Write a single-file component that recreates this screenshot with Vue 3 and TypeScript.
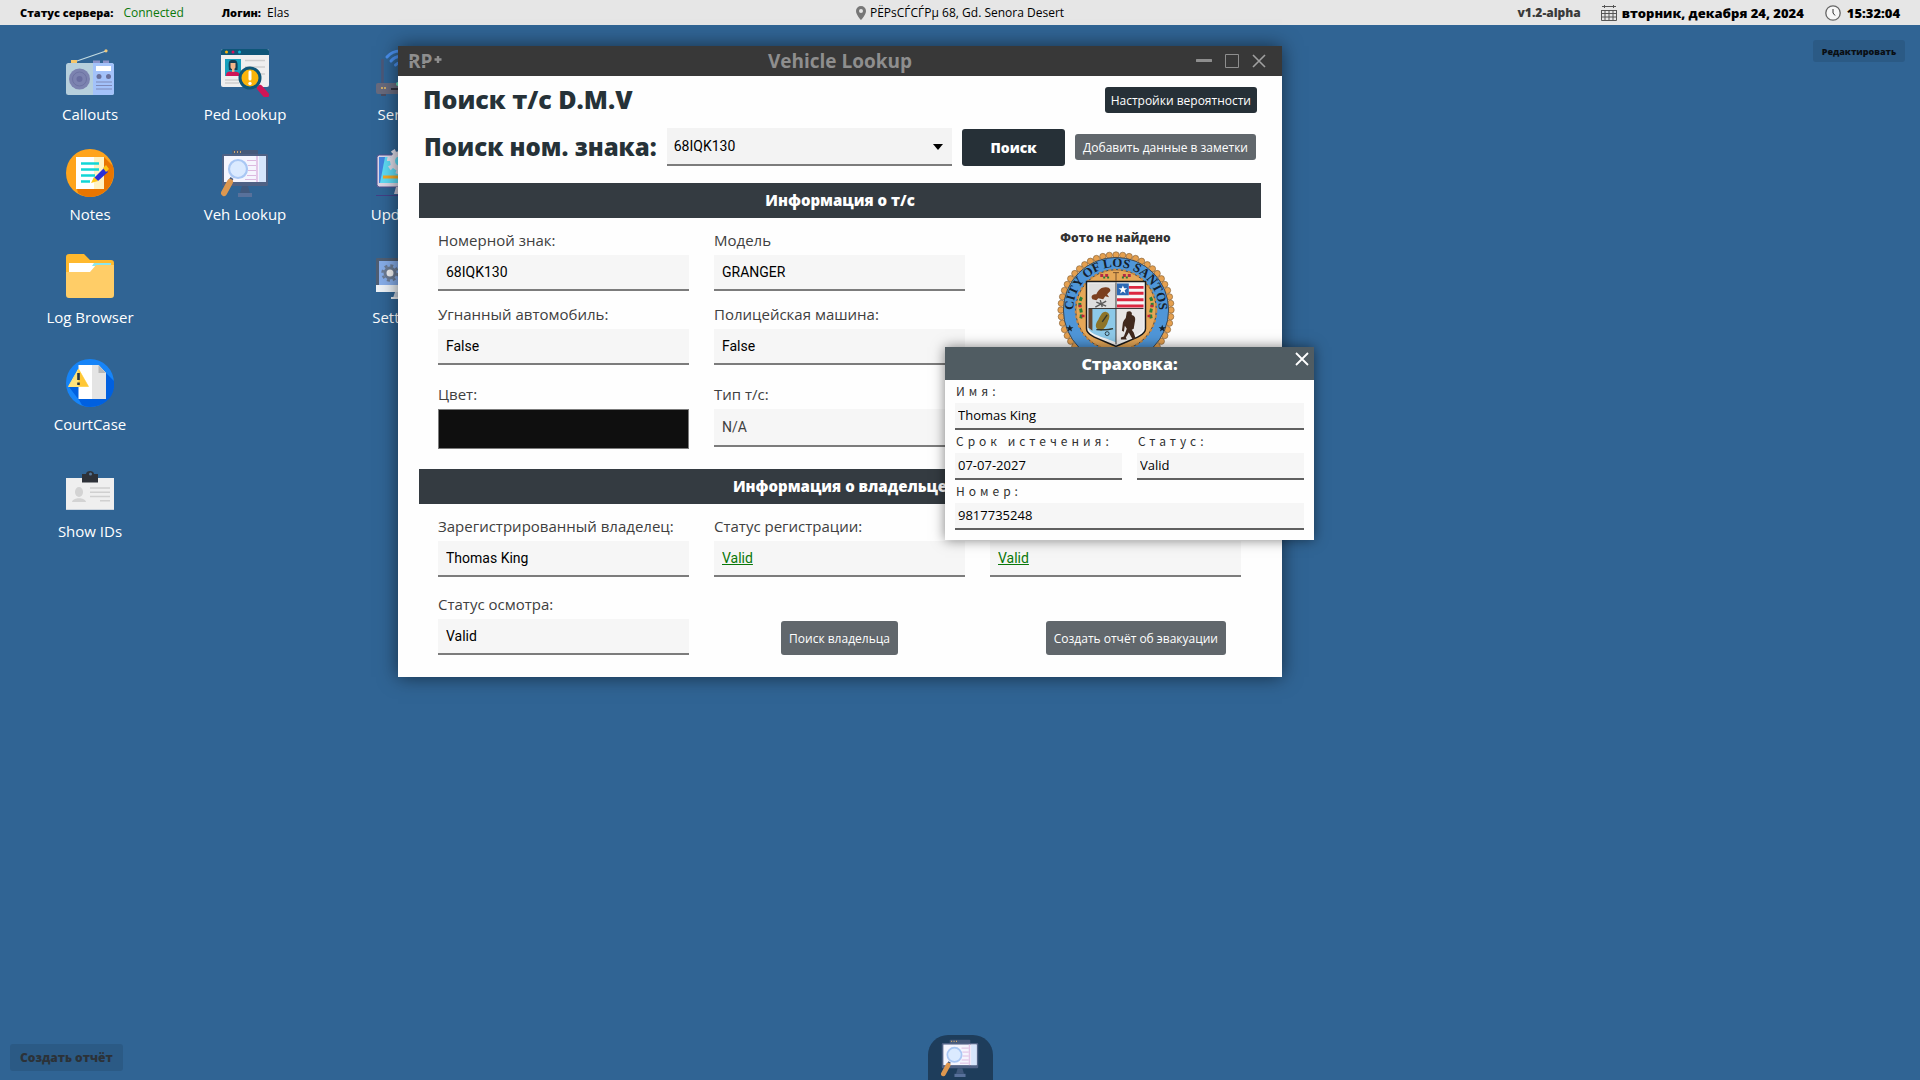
<script setup lang="ts">
import { ref } from 'vue'

interface Shortcut {
  icon: string
  label: string
  col: number
  row: number
}

const shortcuts: Shortcut[] = [
  { icon: 'radio', label: 'Callouts', col: 1, row: 1 },
  { icon: 'ped', label: 'Ped Lookup', col: 2, row: 1 },
  { icon: 'router', label: 'Server', col: 3, row: 1 },
  { icon: 'notes', label: 'Notes', col: 1, row: 2 },
  { icon: 'veh', label: 'Veh Lookup', col: 2, row: 2 },
  { icon: 'update', label: 'Updates', col: 3, row: 2 },
  { icon: 'folder', label: 'Log Browser', col: 1, row: 3 },
  { icon: 'settings', label: 'Settings', col: 3, row: 3 },
  { icon: 'court', label: 'CourtCase', col: 1, row: 4 },
  { icon: 'ids', label: 'Show IDs', col: 1, row: 5 },
]

const plate = ref('68IQK130')
const beads = Array.from({ length: 52 }, (_, i) => {
  const a = (i / 52) * Math.PI * 2
  return { x: Math.round(600 + 560 * Math.cos(a)) / 10, y: Math.round(600 + 560 * Math.sin(a)) / 10 }
})
</script>

<template>
  <div class="desktop">
    <svg class="defs" width="0" height="0" aria-hidden="true">
      <symbol id="i-radio" viewBox="0 0 48 48">
        <path d="M8 13 40 2" stroke="#c3dbe0" stroke-width="1.2" />
        <circle cx="40" cy="1.8" r="1.6" fill="#f2c97a" />
        <rect x="5" y="11" width="6" height="5" fill="#f5c76b" />
        <path d="M27 11.500h7v4h-7zM37 11.500h6v4h-6z" fill="#8c93c9" />
        <rect x="0" y="14" width="48" height="32" rx="2.500" fill="#b6cfdc" />
        <path d="M27 14h18.500a2.500 2.500 0 0 1 2.500 2.500v27a2.500 2.500 0 0 1-2.500 2.500H27z" fill="#a3c2fa" />
        <circle cx="13.500" cy="30" r="10.500" fill="#7c83b0" />
        <circle cx="13.500" cy="30" r="7" fill="none" stroke="#6d73a3" />
        <circle cx="13.500" cy="30" r="3" fill="#696ea0" />
        <rect x="30" y="17" width="15" height="5" fill="#fff" />
        <circle cx="33" cy="27.500" r="2.500" fill="#69709b" />
        <circle cx="42.500" cy="27.500" r="2.500" fill="#69709b" />
        <path d="M30 33h16M30 36.500h16M30 40h16" stroke="#7f8ab8" />
      </symbol>
      <symbol id="i-ped" viewBox="0 0 48 48">
        <rect x="0" y="0" width="48" height="38" rx="2" fill="#efefef" />
        <path d="M0 6V2a2 2 0 0 1 2-2h44a2 2 0 0 1 2 2v4z" fill="#0e5678" />
        <circle cx="5.500" cy="3" r="1.500" fill="#fbb40a" />
        <circle cx="12" cy="3" r="1.500" fill="#d6125a" />
        <circle cx="18.500" cy="3" r="1.500" fill="#14b4d6" />
        <rect x="4" y="10" width="16" height="17" fill="#169fbd" />
        <path d="M8 21c-1-9 0-10 4-10s5 1 4.500 10z" fill="#123f56" />
        <path d="M9.500 14h5v4c0 3-5 3-5 0zM11 18h2.500v5H11z" fill="#f2b58a" />
        <path d="M5 27c0-5 4-5 7-4 3-1 7 0 7 4z" fill="#d01556" />
        <path d="M24 11.500h20M24 18h20M4 31h14M4 34h14M38 25h6" stroke="#cfcfcf" stroke-width="1.600" />
        <path d="m39 39 6 7" stroke="#d01556" stroke-width="6" stroke-linecap="round" />
        <circle cx="29" cy="29" r="10" fill="#fbb40a" stroke="#0e5678" stroke-width="3" />
        <path d="M29 23v7" stroke="#fff" stroke-width="3" stroke-linecap="round" />
        <circle cx="29" cy="34.500" r="1.700" fill="#fff" />
      </symbol>
      <symbol id="i-router" viewBox="0 0 48 48">
        <path d="M6.500 11v24M41.500 11v24" stroke="#4d5878" stroke-width="2.600" stroke-linecap="round" />
        <path d="M11 8c7-8 19-8 26 0M15 12c5-6 13-6 18 0M19.500 16c3-3 6-3 9 0" fill="none" stroke="#4a90f0" stroke-width="3" stroke-linecap="round" />
        <path d="M5 44h5v3H5zM38 44h5v3h-5z" fill="#4b4d61" />
        <rect x="0" y="34" width="48" height="11" rx="2" fill="#686a7d" />
        <path d="M5 39h2M8 39h2" stroke="#f0c060" stroke-width="1.500" />
        <path d="M15 40h12" stroke="#30323f" stroke-width="2" />
        <circle cx="22" cy="35" r="2" fill="#67e0b8" />
      </symbol>
      <symbol id="i-notes" viewBox="0 0 48 48">
        <circle cx="24" cy="24" r="24" fill="#ffa41c" />
        <path d="m38 8 9 9c4 16-8 31-23 31-5 0-9-2-12-4l-1-4z" fill="#e97500" />
        <path d="M10 8h18v32H10z" fill="#fff" />
        <path d="M28 8h10v32H28z" fill="#fff3c4" />
        <path d="M15 14.500h18M15 20.500h18M15 26.500h14M15 32.500h9" stroke="#12d6d6" stroke-width="2.400" />
        <path d="m28 29 10-10 4 4-10 9z" fill="#2a2fd8" />
        <path d="m37 19 3-3 3 4-3 3zM28 28l4 4-7 2z" fill="#ffc414" />
      </symbol>
      <symbol id="i-veh" viewBox="0 0 48 48">
        <path d="M11 5V2a1 1 0 0 1 1-1h24a1 1 0 0 1 1 1v3z" fill="#45597a" />
        <path d="M13 3h1M16 3h1M19 3h1" stroke="#f7c06b" stroke-width="1.500" />
        <rect x="1" y="5" width="46" height="32" rx="1.500" fill="#4f6184" />
        <rect x="3" y="7" width="42" height="26" fill="#f5f5fe" />
        <path d="M38 7h7v26h-7z" fill="#d6e5fb" />
        <path d="M35 7h2v26h-2z" fill="#e3c7e8" />
        <path d="M26 11.500h9M27 16.500h8M27 21.500h8M26 26.500h9M24 30.500h11" stroke="#dcb9df" stroke-width="1.200" />
        <path d="M21 37h6l2 7H19z" fill="#41597d" />
        <path d="M17 44h14v4H17z" fill="#58719b" />
        <circle cx="17" cy="20" r="9" fill="#dbeaff" stroke="#a9c7f4" stroke-width="2.200" />
        <path d="m11 29-2 3" stroke="#47597a" stroke-width="3.500" />
        <path d="m9 33-6 11" stroke="#dd974f" stroke-width="6" stroke-linecap="round" />
      </symbol>
      <symbol id="i-update" viewBox="0 0 48 48">
        <rect x="1" y="6" width="46" height="32" rx="2.500" fill="#dcd8e6" stroke="#56508f" />
        <path d="M3 8h42v26H3z" fill="#5edcf5" />
        <path d="M3 8h6l-5 26H3z" fill="#4284e0" />
        <path d="M7 28h34" stroke="#f6a823" stroke-width="3" />
        <path d="M20 38h8l2 7H18z" fill="#cbc6d7" />
        <path d="M0 46.500h48" stroke="#433f85" />
        <circle cx="24" cy="12" r="7.500" fill="none" stroke="#dedce8" stroke-width="5" />
        <circle cx="24" cy="12" r="11" fill="none" stroke="#dedce8" stroke-width="4" stroke-dasharray="4 4.600" />
      </symbol>
      <symbol id="i-folder" viewBox="0 0 48 48">
        <path d="M0 5a3 3 0 0 1 3-3h15l6 6h21a3 3 0 0 1 3 3v20H0z" fill="#ffb92e" />
        <path d="M3 11h42v12H3z" fill="#fff" />
        <path d="M28 11h17v3H26z" fill="#8be6ee" />
        <path d="M0 20h24l6-7h18v30a3 3 0 0 1-3 3H3a3 3 0 0 1-3-3z" fill="#ffcd67" />
      </symbol>
      <symbol id="i-settings" viewBox="0 0 48 48">
        <rect x="0" y="6" width="48" height="34" rx="1" fill="#4f5e73" />
        <path d="M3 9h42v24H3z" fill="#86ade9" />
        <path d="M0 33h48v7H0z" fill="#edf2f7" />
        <path d="M19 40h10l2 6H17z" fill="#c9d3df" />
        <path d="M15 45h18v2H15z" fill="#e9edf1" />
        <circle cx="14" cy="21" r="5" fill="#f2f2f2" stroke="#6c7c94" stroke-width="3" />
        <circle cx="14" cy="21" r="7.500" fill="none" stroke="#6c7c94" stroke-width="2.500" stroke-dasharray="3 2.900" />
      </symbol>
      <symbol id="i-court" viewBox="0 0 48 48">
        <circle cx="24" cy="24" r="24" fill="#1684f8" />
        <path d="m40 14 8 8c2 15-9 26-24 26-3 0-6-1-8-2L13 41 3 28z" fill="#0060e0" />
        <path d="M12.500 6h20l7.500 8v26H12.500z" fill="#fff" />
        <path d="M26 6h6.500l7.500 8v26H26z" fill="#e4e4e4" />
        <path d="M32.500 6v8H40z" fill="#b8b8b8" />
        <path d="M2.500 27.500 12.500 10l10 17.500z" fill="#ffe27b" stroke="#ffe27b" stroke-linejoin="round" />
        <path d="m12.500 10 10 17.500h-10z" fill="#ffc736" />
        <path d="M12.500 14v7M12.500 23.500v2.500" stroke="#263440" stroke-width="2.600" />
      </symbol>
      <symbol id="i-ids" viewBox="0 0 48 48">
        <rect x="0" y="12" width="48" height="32" fill="#efefef" />
        <path d="M0 43.500h48" stroke="#cdd5de" />
        <path d="M16 8h4c0-4 8-4 8 0h4v8.500H16z" fill="#2d3138" />
        <circle cx="24.500" cy="8" r="1.500" fill="#56789a" />
        <ellipse cx="13" cy="26" rx="4" ry="5" fill="#d3d3d3" />
        <path d="M6 36c1-5 13-5 14 0z" fill="#d3d3d3" />
        <path d="M24 22h20M24 26.300h20M24 30.500h20M34 34.800h10" stroke="#d0d0d0" stroke-width="1.500" />
      </symbol>
    </svg>

    <header class="topbar">
      <div class="side">
        <b>Статус сервера:</b><span class="connected">Connected</span>
        <b class="login">Логин:</b><span class="user">Elas</span>
      </div>
      <div class="place">
        <svg width="10" height="14" viewBox="0 0 10 14" aria-hidden="true">
          <path d="M5 0a5 5 0 0 0-5 5c0 4 5 9 5 9s5-5 5-9a5 5 0 0 0-5-5zm0 3a2 2 0 1 1 0 4 2 2 0 0 1 0-4z" fill="#777" />
        </svg>
        <span>РЁРѕСЃСЃРµ 68, Gd. Senora Desert</span>
      </div>
      <div class="side end">
        <b class="version">v1.2-alpha</b>
        <svg width="16" height="16" viewBox="0 0 16 16" fill="none" stroke="#555" aria-hidden="true">
          <path d="M1 1.500h14M.5 5v10.500h15V5M0 5.500h16M0 8.500h16M0 12h16M4 5v10M8 5v10M12 5v10" />
          <path d="M3.500 0v3M12.500 0v3" />
        </svg>
        <b class="date">вторник, декабря 24, 2024</b>
        <svg width="16" height="16" viewBox="0 0 16 16" fill="none" aria-hidden="true">
          <circle cx="8" cy="8" r="7.200" fill="#f7f7f7" stroke="#666" stroke-width="1.300" />
          <path d="M8 4v4l2 2.500" stroke="#333" />
        </svg>
        <b class="time">15:32:04</b>
      </div>
    </header>

    <main class="space">
      <nav class="shortcuts" aria-label="Desktop">
        <button
          v-for="s in shortcuts"
          :key="s.label"
          type="button"
          class="shortcut"
          :style="{ gridColumn: s.col, gridRow: s.row }"
        >
          <svg width="48" height="48" aria-hidden="true"><use :href="'#i-' + s.icon" /></svg>
          <span>{{ s.label }}</span>
        </button>
      </nav>

      <button type="button" class="ghost edit">Редактировать</button>

      <section class="window" aria-label="Vehicle Lookup">
        <div class="titlebar">
          <svg class="logo" width="36" height="28" viewBox="0 0 36 28" role="img" aria-label="RP+">
            <text x="0" y="21" class="logo-text">RP</text>
            <path d="M0 13.500h5M14 17.500h4" stroke="#383838" />
            <path d="M30 9v7M26.500 12.500h7" stroke="#8e8e8e" stroke-width="2.400" />
          </svg>
          <h1>Vehicle Lookup</h1>
          <div class="controls">
            <button type="button" aria-label="Свернуть">
              <svg width="16" height="14" viewBox="0 0 16 14"><path d="M1 6.500h14" stroke="#8e8e8e" stroke-width="3" stroke-linecap="round" /></svg>
            </button>
            <button type="button" aria-label="Развернуть">
              <svg width="14" height="14" viewBox="0 0 14 14"><path d="M.5.5h13v13H.5z" fill="none" stroke="#8e8e8e" /></svg>
            </button>
            <button type="button" aria-label="Закрыть">
              <svg width="14" height="14" viewBox="0 0 14 14"><path d="m1 1 12 12M13 1 1 13" stroke="#a0a0a0" stroke-width="1.600" /></svg>
            </button>
          </div>
        </div>

        <div class="body">
          <div class="headline">
            <h2>Поиск т/с D.M.V</h2>
            <button type="button" class="dark small">Настройки вероятности</button>
          </div>
          <form class="search" @submit.prevent>
            <label for="plate-search">Поиск ном. знака:</label>
            <div class="combo">
              <select id="plate-search" v-model="plate">
                <option>68IQK130</option>
              </select>
              <svg width="10" height="6" viewBox="0 0 10 6" aria-hidden="true"><path d="M0 0h10L5 6z" /></svg>
            </div>
            <button type="submit" class="dark go">Поиск</button>
            <button type="button" class="grey small">Добавить данные в заметки</button>
          </form>

          <h3 class="band">Информация о т/с</h3>
          <div class="fields vehicle">
            <div class="field">
              <label for="f-plate">Номерной знак:</label>
              <input id="f-plate" type="text" readonly value="68IQK130" />
            </div>
            <div class="field">
              <label for="f-model">Модель</label>
              <input id="f-model" type="text" readonly value="GRANGER" />
            </div>
            <div class="field">
              <label for="f-stolen">Угнанный автомобиль:</label>
              <input id="f-stolen" type="text" readonly value="False" />
            </div>
            <div class="field">
              <label for="f-police">Полицейская машина:</label>
              <input id="f-police" type="text" readonly value="False" />
            </div>
            <div class="field third">
              <label for="f-color">Цвет:</label>
              <input id="f-color" class="swatch" type="text" readonly value="" />
            </div>
            <div class="field third">
              <label for="f-type">Тип т/с:</label>
              <input id="f-type" class="faded" type="text" readonly value="N/A" />
            </div>
            <figure class="photo">
              <figcaption>Фото не найдено</figcaption>
              <svg width="118" height="118" viewBox="0 0 120 120" role="img" aria-label="City of Los Santos">
                <circle v-for="(b, i) in beads" :key="i" :cx="b.x" :cy="b.y" r="3.200" fill="#e5a04f" stroke="#7b5a35" stroke-width=".6" />
                <circle cx="60" cy="60" r="54" fill="#e5a04f" />
                <circle cx="60" cy="60" r="53.500" fill="#4f96d8" stroke="#29323b" stroke-width=".8" />
                <circle cx="60" cy="60" r="41" fill="#e5a757" stroke="#29323b" stroke-width=".8" />
                <circle cx="60" cy="60" r="41" fill="none" stroke="#c98942" stroke-width="2" stroke-dasharray="3 2" />
                <path id="seal-top" d="M17.500 69a43.500 43.500 0 1 1 85 0" fill="none" />
                <text class="seal-text"><textPath href="#seal-top" startOffset="50%" text-anchor="middle">CITY OF LOS SANTOS</textPath></text>
                <path d="m13 75 1 2.500h2.700l-2.200 1.700.8 2.700-2.300-1.600-2.300 1.600.8-2.700-2.200-1.700H12z" fill="#16202a" />
                <path d="m107 75 1 2.500h2.700l-2.200 1.700.8 2.700-2.300-1.600-2.300 1.600.8-2.700-2.200-1.700h2.700z" fill="#16202a" />
                <path d="M44 25h9M67 25h9" stroke="#b52b44" stroke-width="3" stroke-dasharray="3 2" />
                <path d="M47 27h8M66 27h7" stroke="#287a36" stroke-width="2" stroke-dasharray="2 2" />
                <path d="M60 22v8M57 22h6" stroke="#75502d" />
                <path d="M25 47c-5 10 2 12-1 22M95 47c5 10-2 12 1 22" fill="none" stroke="#29823a" stroke-width="3" stroke-dasharray="4 2" />
                <path d="M22 56h3M25 66h3M98 56h-3M95 66h-3" stroke="#c4243a" stroke-width="2.500" />
                <path d="M30 31h60v48c0 8-18 12-30 18-12-6-30-10-30-18z" fill="#f4f4f4" stroke="#1a1a1a" stroke-width="1.500" />
                <path d="M32 33h28v25H32z" fill="#dedede" />
                <path d="M32 59h28v34c-10-5-28-8-28-15z" fill="#8dc9e8" />
                <path d="M32 59h4v22l-4-3z" fill="#68452a" />
                <path d="M61 59h27v19c0 7-17 10-27 15z" fill="#e8e6e6" />
                <path d="M61 33h27v25H61z" fill="#f6f6f6" />
                <path d="M73 37h15M73 43h15M61 49.500h27M61 56h27" stroke="#dc2740" stroke-width="3" />
                <path d="M61 33h12v12H61z" fill="#2c69b5" />
                <path d="m67 35 1.200 3h3.200l-2.600 2 1 3.200-2.800-2-2.800 2 1-3.200-2.600-2h3.200z" fill="#fff" />
                <path d="M36 49c-2-3 0-5 4-5 2-5 6-8 11-7 2 0 4 2 3 4l-3 3 2 3-4-1-2 3-5-1-2 2z" fill="#7b3f1f" />
                <path d="m40 52 10 4M50 51l-11 6M44 50l2 7" stroke="#5a5a5a" stroke-width="1.400" />
                <path d="M43 80c-5-1-4-6-1-10 2-4 4-9 8-8 4 1 4 5 2 9-1 5-4 8-7 10z" fill="#8d7429" />
                <path d="M40 80c6 0 10 1 17-1M46 72l5-7" stroke="#33362c" stroke-width="1.400" />
                <circle cx="51" cy="84" r="2" fill="none" stroke="#2b3c44" />
                <path d="M71 62c3-2 6 0 5 3 4 1 4 4 3 8l-1 6-2 1 2 3 2 6-3 1-4-7-3 5 1 2h-6v-2l3-1 3-8-2-3-1 6-2-1 1-8c1-3 2-3 3-5z" fill="#41291d" />
                <path d="M60 32v63M32 58.500h56" stroke="#333" />
              </svg>
            </figure>
          </div>

          <h3 class="band">Информация о владельце</h3>
          <div class="fields owner">
            <div class="field">
              <label for="f-owner">Зарегистрированный владелец:</label>
              <input id="f-owner" type="text" readonly value="Thomas King" />
            </div>
            <div class="field">
              <label for="f-reg">Статус регистрации:</label>
              <input id="f-reg" class="valid" type="text" readonly value="Valid" />
            </div>
            <div class="field">
              <label for="f-ins">Статус страховки:</label>
              <input id="f-ins" class="valid" type="text" readonly value="Valid" />
            </div>
            <div class="field">
              <label for="f-insp">Статус осмотра:</label>
              <input id="f-insp" type="text" readonly value="Valid" />
            </div>
            <button type="button" class="grey tall">Поиск владельца</button>
            <button type="button" class="grey tall impound">Создать отчёт об эвакуации</button>
          </div>
        </div>
      </section>

      <section class="popup" aria-label="Страховка">
        <div class="popup-head">
          <h2>Страховка:</h2>
          <button type="button" aria-label="Закрыть">
            <svg width="14" height="14" viewBox="0 0 14 14"><path d="m1 1 12 12M13 1 1 13" stroke="#fff" stroke-width="1.800" /></svg>
          </button>
        </div>
        <div class="popup-body">
          <div class="slot wide">
            <label for="p-name">Имя:</label>
            <input id="p-name" type="text" readonly value="Thomas King" />
          </div>
          <div class="slot">
            <label for="p-exp">Срок истечения:</label>
            <input id="p-exp" type="text" readonly value="07-07-2027" />
          </div>
          <div class="slot">
            <label for="p-status">Статус:</label>
            <input id="p-status" type="text" readonly value="Valid" />
          </div>
          <div class="slot wide">
            <label for="p-num">Номер:</label>
            <input id="p-num" type="text" readonly value="9817735248" />
          </div>
        </div>
      </section>
    </main>

    <footer class="taskbar">
      <button type="button" class="ghost report">Создать отчёт</button>
      <button type="button" class="dock" aria-label="Veh Lookup">
        <svg width="38" height="38" aria-hidden="true"><use href="#i-veh" /></svg>
      </button>
    </footer>
  </div>
</template>

<style>
body {
  margin: 0;
  background: #306494;
}
</style>

<style scoped>
.desktop {
  min-height: 100vh;
  display: flex;
  flex-direction: column;
  background: #306494;
  font-family: "Open Sans", "Noto Sans", sans-serif;
  font-size: 12px;
  color: #000;
}
.desktop *,
.desktop *::before {
  box-sizing: border-box;
}
.defs {
  position: absolute;
}
button {
  margin: 0;
  padding: 0;
  border: 0;
  background: none;
  font-family: inherit;
  cursor: pointer;
  white-space: nowrap;
}
input,
select {
  margin: 0;
  border: 0;
  border-radius: 0;
  outline: 0;
  min-width: 0;
}
h1,
h2,
h3,
figure {
  margin: 0;
}
svg {
  display: block;
  flex: none;
}

.topbar {
  display: flex;
  align-items: center;
  height: 25px;
  padding: 0 20px;
  background: #e6e6e6;
  white-space: nowrap;
}
.side {
  flex: 1;
  display: flex;
  align-items: center;
}
.side b {
  font-size: 11px;
  font-weight: 800;
}
.side.end {
  justify-content: flex-end;
}
.connected {
  margin-left: 10px;
  color: #0a780a;
}
.login {
  margin-left: 38px;
}
.user {
  margin-left: 6px;
}
.place {
  display: flex;
  align-items: center;
  gap: 4px;
}
.end .version {
  margin-right: 20px;
  font-size: 12px;
  color: #3a3a3a;
}
.end .date {
  margin: 0 21px 0 5px;
  font-size: 13px;
}
.end .time {
  margin-left: 6px;
  font-size: 13px;
}

.space {
  position: relative;
  flex: 1;
  min-height: 660px;
}
.shortcuts {
  display: grid;
  grid-template-columns: 156px 154px 156px;
  grid-template-rows: 100px 103px 107px 107px 107px;
  padding: 24px 0 0 12px;
}
.shortcut {
  display: flex;
  flex-direction: column;
  align-items: center;
  align-self: start;
  gap: 6px;
  color: #fff;
  font-size: 15px;
  line-height: 22px;
}

.ghost {
  background: #2b5a85;
  border-radius: 3px;
  font-weight: 800;
}
.edit {
  position: absolute;
  top: 15px;
  right: 15px;
  width: 92px;
  height: 22px;
  font-size: 9px;
  color: #0a0f14;
}

.window {
  position: absolute;
  left: 398px;
  top: 21px;
  width: 884px;
  background: #fefefe;
  box-shadow: 0 0 18px rgba(0, 0, 0, 0.55);
}
.titlebar {
  display: grid;
  grid-template-columns: 1fr auto 1fr;
  align-items: center;
  height: 30px;
  padding: 0 10px;
  background: #383838;
}
.logo-text {
  font: 700 19px "Open Sans", sans-serif;
  fill: #8e8e8e;
}
.titlebar h1 {
  font-size: 19px;
  line-height: 26px;
  font-weight: 700;
  color: #8e8e8e;
}
.controls {
  display: flex;
  justify-content: flex-end;
  gap: 13px;
  padding-right: 6px;
}
.body {
  padding: 11px 21px 22px;
}
.headline {
  display: flex;
  align-items: center;
  justify-content: space-between;
  height: 26px;
  padding: 0 4px;
}
.headline h2,
.search label {
  font-size: 24px;
  line-height: 26px;
  font-weight: 800;
  color: #263238;
  white-space: nowrap;
}
.headline h2 {
  font-size: 25px;
  line-height: 24px;
  padding-bottom: 2px;
}
.dark,
.grey {
  border-radius: 3px;
  color: #fff;
  font-size: 12px;
}
.dark {
  background: #263037;
}
.grey {
  background: #61676c;
}
.small {
  height: 26px;
  padding: 0 6px;
}
.grey.small {
  padding: 0 8px;
}
.search {
  display: flex;
  align-items: center;
  gap: 10px;
  height: 38px;
  margin: 15px 0 17px;
  padding: 0 5px;
}
.combo {
  position: relative;
  flex: 1;
  min-width: 0;
}
.combo select {
  appearance: none;
  display: block;
  width: 100%;
  height: 38px;
  padding: 0 7px;
  background: #f3f3f3;
  border-bottom: 2px solid #7c7c7c;
  font: 14px Roboto, sans-serif;
  color: #000;
}
.combo svg {
  position: absolute;
  right: 9px;
  top: 16px;
  pointer-events: none;
}
.go {
  width: 103px;
  height: 37px;
  font-size: 14px;
  font-weight: 800;
}
.band {
  height: 35px;
  background: #343b41;
  color: #fff;
  font-size: 15px;
  line-height: 35px;
  font-weight: 800;
  text-align: center;
}
.fields {
  display: grid;
  grid-template-columns: repeat(3, 1fr);
  column-gap: 25px;
  padding: 9px 20px 0 19px;
}
.field {
  display: flex;
  flex-direction: column;
}
.field label {
  padding-bottom: 2px;
  font-size: 15px;
  line-height: 26px;
  color: #404040;
  white-space: nowrap;
}
.field input {
  height: 36px;
  padding: 0 8px;
  background: #f6f6f6;
  border-bottom: 2px solid #7c7c7c;
  font: 14px Roboto, sans-serif;
  color: #000;
}
.vehicle {
  row-gap: 10px;
  padding-bottom: 20px;
}
.third {
  margin-top: 6px;
}
.field .swatch {
  height: 40px;
  background: #0f0f0f;
  border: 1px solid #7c7c7c;
}
.field .faded {
  height: 38px;
  color: #404040;
}
.field .valid {
  color: #0a780a;
  text-decoration: underline;
}
.photo {
  grid-column: 3;
  grid-row: 1 / span 3;
  display: flex;
  flex-direction: column;
  align-items: center;
  gap: 2px;
}
.photo figcaption {
  font-size: 12px;
  line-height: 22px;
  font-weight: 800;
  color: #333;
}
.seal-text {
  font: 700 13px "Liberation Serif", serif;
  fill: #14202c;
}
.owner {
  row-gap: 14px;
}
.tall {
  align-self: end;
  justify-self: center;
  height: 34px;
  padding: 0 8px;
}
.impound {
  justify-self: end;
  margin-right: 15px;
}

.popup {
  position: absolute;
  left: 945px;
  top: 322px;
  width: 369px;
  background: #fefefe;
  box-shadow: 0 0 12px rgba(0, 0, 0, 0.5);
}
.popup-head {
  position: relative;
  height: 33px;
  background: #505c62;
}
.popup-head h2 {
  font-size: 16px;
  line-height: 34px;
  font-weight: 800;
  color: #fff;
  text-align: center;
}
.popup-head button {
  position: absolute;
  top: 5px;
  right: 5px;
}
.popup-body {
  display: grid;
  grid-template-columns: repeat(2, minmax(0, 1fr));
  column-gap: 15px;
  padding: 0 10px 10px;
}
.slot {
  display: flex;
  flex-direction: column;
}
.wide {
  grid-column: 1 / -1;
}
.slot label {
  padding: 0 0 1px 1px;
  font-family: "Noto Sans CJK JP", sans-serif;
  font-size: 12px;
  line-height: 22px;
  letter-spacing: 4px;
  color: #303030;
  white-space: nowrap;
}
.slot input {
  width: 100%;
  height: 27px;
  padding: 0 3px 2px;
  background: #f6f6f6;
  border-bottom: 2px solid #606060;
  font: 500 13px "Open Sans", "Noto Sans", sans-serif;
  color: #000;
}

.taskbar {
  display: grid;
  grid-template-columns: 1fr auto 1fr;
  align-items: end;
  height: 45px;
  padding: 0 10px;
}
.report {
  justify-self: start;
  align-self: center;
  height: 27px;
  padding: 0 10px;
  font-size: 12px;
  color: #2c3238;
}
.dock {
  display: flex;
  justify-content: center;
  align-items: center;
  width: 65px;
  height: 45px;
  border-radius: 20px 20px 0 0;
  background: #1e3d5b;
}
</style>
